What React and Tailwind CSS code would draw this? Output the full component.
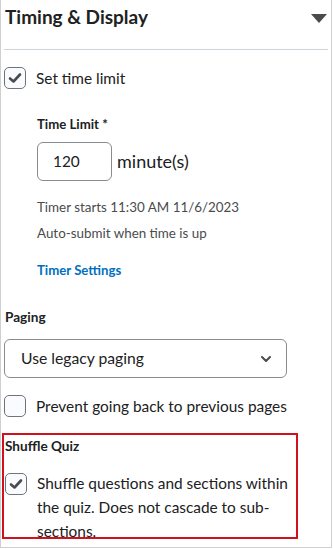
import React from "react";

function Check({ checked }) {
  return (
    <div className="w-[22px] h-[22px] shrink-0 rounded-[5px] border border-[#6e7477] bg-[#f9fbff] flex items-center justify-center">
      {checked && (
        <svg width="14" height="12" viewBox="0 0 14 12">
          <path d="M2 6.5 L5.5 9.5 L12 2.5" fill="none" stroke="#494c4e" strokeWidth="2.6" strokeLinecap="round" strokeLinejoin="round" />
        </svg>
      )}
    </div>
  );
}

export default function App() {
  return (
    <div className="w-[332px] h-[548px] border-l border-r border-b border-[#d0d0d0] bg-white text-[#202122] overflow-hidden" style={{ fontFamily: "Lato, 'Noto Sans', sans-serif" }}>
      <div className="flex items-start justify-between mx-[3px] h-[50px] border-b border-[#cdd5dc]">
        <div className="pl-[1px] pt-[5px] text-[19px] leading-[24px] font-bold text-[#202122]">Timing &amp; Display</div>
        <svg className="mt-[14px] mr-[1px]" width="16" height="9" viewBox="0 0 16 9">
          <path d="M0 0 H16 L8 9 Z" fill="#494c4e" />
        </svg>
      </div>
      <div className="pl-[3px]">
        <div className="flex items-center gap-[10px] mt-[17px] h-[22px]">
          <Check checked />
          <span className="text-[15.4px] leading-[22px]">Set time limit</span>
        </div>
        <div className="pl-[33px]">
          <div className="mt-[25px] text-[13.2px] leading-[20px] font-bold">Time Limit *</div>
          <div className="flex items-center mt-[8px]">
            <div className="w-[75px] h-[39px] border border-[#868c8f] rounded-[6px] flex items-center pl-[15px] text-[15.4px]">120</div>
            <span className="ml-[5px] text-[18px]">minute(s)</span>
          </div>
          <div className="mt-[16px] text-[13.4px] leading-[20px] text-[#494c4e]">Timer starts 11:30 AM 11/6/2023</div>
          <div className="mt-[6px] text-[13.4px] leading-[20px] text-[#494c4e]">Auto-submit when time is up</div>
          <div className="mt-[17px] text-[13.2px] leading-[20px] font-bold text-[#006fbf]">Timer Settings</div>
        </div>
        <div className="mt-[27px] pl-[1px] text-[13.6px] leading-[20px] font-bold">Paging</div>
        <div className="mt-[12px] w-[283px] h-[39px] border border-[#868c8f] rounded-[6px] flex items-center justify-between pl-[16px] pr-[14px] text-[15.7px]">
          <span>Use legacy paging</span>
          <svg width="12" height="8" viewBox="0 0 12 8">
            <path d="M2 2 L6 6 L10 2" fill="none" stroke="#494c4e" strokeWidth="2" strokeLinecap="round" strokeLinejoin="round" />
          </svg>
        </div>
        <div className="flex items-center gap-[10px] mt-[17px] h-[22px]">
          <Check />
          <span className="text-[15.4px] leading-[22px]">Prevent going back to previous pages</span>
        </div>
      </div>
      <div className="ml-[1px] mt-[16px] w-[296px] h-[106px] border-2 border-[#d0121d] pl-[1px] pt-[1px]">
        <div className="text-[13.6px] leading-[20px] font-bold">Shuffle Quiz</div>
        <div className="flex items-start gap-[10px] mt-[16px]">
          <div className="mt-[1px]"><Check checked /></div>
          <div className="text-[15.4px] leading-[24px] -mt-[1px] w-[255px]">Shuffle questions and sections within the quiz. Does not cascade to sub-sections.</div>
        </div>
      </div>
    </div>
  );
}
